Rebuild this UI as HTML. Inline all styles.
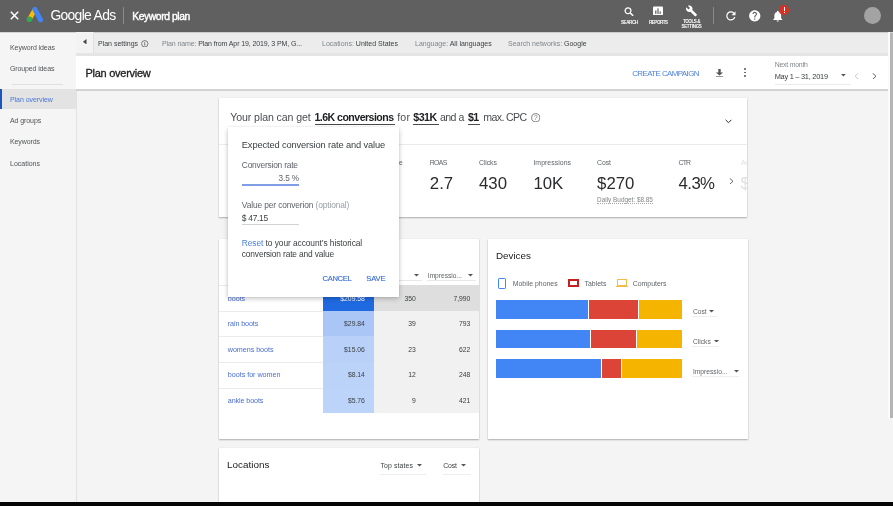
<!DOCTYPE html>
<html><head><meta charset="utf-8">
<style>
*{box-sizing:border-box;margin:0;padding:0}
html,body{width:893px;height:506px;overflow:hidden;background:#f4f4f4;}
body{filter:blur(0.5px);font-family:"Liberation Sans",sans-serif;color:#202124}
.t{position:absolute;white-space:nowrap;line-height:1}
.r{position:absolute}
.card{position:absolute;background:#fff;box-shadow:0 1px 1.5px rgba(0,0,0,.28),0 0 1px rgba(0,0,0,.12)}
</style></head>
<body>
<div class="r" style="left:0px;top:0px;width:893px;height:32px;background:#606060;"></div>
<svg class="r" style="left:9.5px;top:11px" width="9" height="9" viewBox="0 0 9 9"><path d="M0.8 0.8L8.2 8.2M8.2 0.8L0.8 8.2" stroke="#fff" stroke-width="1.5"/></svg>
<svg class="r" style="left:25px;top:6px" width="19" height="18" viewBox="0 0 19 18">
<path d="M4.5 13.2 L9.6 4.2" stroke="#fbbc04" stroke-width="4.6" stroke-linecap="round"/>
<path d="M9.9 3.4 L15.5 13.8" stroke="#4285f4" stroke-width="5" stroke-linecap="round"/>
<circle cx="4.5" cy="13.2" r="2.8" fill="#34a853"/></svg>
<div class="t" style="top:9px;font-size:13.9px;color:#fff;left:50.40px;letter-spacing:-0.674px;">Google Ads</div>
<div class="r" style="left:122.5px;top:7px;width:1px;height:16.5px;background:#8a8a8a;"></div>
<div class="t" style="top:12px;font-size:10.3px;color:#fff;left:132.30px;letter-spacing:-0.410px;-webkit-text-stroke:0.4px #fff;">Keyword plan</div>
<svg class="r" style="left:624px;top:7px" width="11" height="9" viewBox="0 0 11 9"><circle cx="4" cy="3.8" r="2.9" fill="none" stroke="#fff" stroke-width="1.3"/><path d="M6.2 6 L9.2 8.8" stroke="#fff" stroke-width="1.5"/></svg>
<div class="t" style="top:21px;font-size:4.5px;color:#fff;left:579.30px;font-weight:bold;letter-spacing:-0.381px;width:100px;text-align:center;">SEARCH</div>
<svg class="r" style="left:653px;top:5.7px" width="10" height="9.8" viewBox="0 0 10 9"><rect x="0" y="0" width="10" height="9" rx="1" fill="#fff"/><rect x="2.2" y="4" width="1.2" height="3.5" fill="#606060"/><rect x="4.4" y="2" width="1.2" height="5.5" fill="#606060"/><rect x="6.6" y="5" width="1.2" height="2.5" fill="#606060"/></svg>
<div class="t" style="top:21px;font-size:4.5px;color:#fff;left:608.30px;font-weight:bold;letter-spacing:-0.426px;width:100px;text-align:center;">REPORTS</div>
<svg class="r" style="left:684.5px;top:4.6px" width="13" height="12" viewBox="0 0 24 24"><path fill="#fff" d="M22.7 19l-9.1-9.1c.9-2.3.4-5-1.5-6.9-2-2-5-2.4-7.4-1.3L9 6 6 9 1.6 4.7C.4 7.1.9 10.1 2.9 12.1c1.9 1.9 4.6 2.4 6.9 1.5l9.1 9.1c.4.4 1 .4 1.4 0l2.3-2.3c.5-.4.5-1.1.1-1.4z"/></svg>
<div class="t" style="top:20px;font-size:4.5px;color:#fff;left:641.50px;font-weight:bold;letter-spacing:-0.403px;width:100px;text-align:center;">TOOLS &amp;</div>
<div class="t" style="top:25px;font-size:4.5px;color:#fff;left:641.50px;font-weight:bold;letter-spacing:-0.301px;width:100px;text-align:center;">SETTINGS</div>
<div class="r" style="left:713px;top:7px;width:1px;height:16.5px;background:#8a8a8a;"></div>
<svg class="r" style="left:724.1px;top:9px" width="13.8" height="13.8" viewBox="0 0 24 24"><path fill="#fff" d="M17.65 6.35A7.958 7.958 0 0 0 12 4c-4.42 0-7.99 3.58-7.99 8s3.57 8 7.99 8c3.73 0 6.84-2.55 7.73-6h-2.08A5.99 5.99 0 0 1 12 18c-3.31 0-6-2.69-6-6s2.69-6 6-6c1.66 0 3.14.69 4.22 1.78L13 11h7V4l-2.35 2.35z"/></svg>
<svg class="r" style="left:747.5px;top:8.7px" width="13.5" height="13.5" viewBox="0 0 24 24"><path fill="#fff" d="M12 2C6.48 2 2 6.48 2 12s4.48 10 10 10 10-4.48 10-10S17.52 2 12 2zm1 17h-2v-2h2v2zm2.07-7.75l-.9.92C13.45 12.9 13 13.5 13 15h-2v-.5c0-1.1.45-2.1 1.17-2.83l1.24-1.26c.37-.36.59-.86.59-1.41 0-1.1-.9-2-2-2s-2 .9-2 2H8c0-2.21 1.79-4 4-4s4 1.79 4 4c0 .88-.36 1.68-.93 2.25z"/></svg>
<svg class="r" style="left:770.5px;top:8.5px" width="13.5" height="14" viewBox="0 0 24 24"><path fill="#fff" d="M12 22c1.1 0 2-.9 2-2h-4c0 1.1.89 2 2 2zm6-6v-5c0-3.07-1.64-5.64-4.5-6.32V4c0-.83-.67-1.5-1.5-1.5s-1.5.67-1.5 1.5v.68C7.63 5.36 6 7.92 6 11v5l-2 2v1h16v-1l-2-2z"/></svg>
<div class="r" style="left:779px;top:5px;width:10.4px;height:10.4px;border-radius:50%;background:#d93025"></div>
<div class="r" style="left:783.6px;top:6.8px;width:1.2px;height:4.2px;background:#fff;"></div>
<div class="r" style="left:783.6px;top:12px;width:1.2px;height:1.2px;background:#fff;"></div>
<div class="r" style="left:864px;top:6.9px;width:17px;height:17px;border-radius:50%;background:#a3a3a3"></div>
<div class="r" style="left:0px;top:32px;width:76px;height:474px;background:#f5f5f5;"></div>
<div class="r" style="left:75.5px;top:32px;width:0.8px;height:474px;background:#e2e2e2;"></div>
<div class="t" style="top:44px;font-size:7px;color:#505357;left:10.00px;letter-spacing:-0.076px;">Keyword ideas</div>
<div class="t" style="top:65px;font-size:7px;color:#505357;left:10.00px;letter-spacing:-0.127px;">Grouped ideas</div>
<div class="r" style="left:12px;top:83.5px;width:51px;height:0.8px;background:#e0e0e0;"></div>
<div class="r" style="left:0px;top:88.8px;width:75.5px;height:20.5px;background:#e3e3e3;"></div>
<div class="r" style="left:0px;top:88.8px;width:1.5px;height:20.5px;background:#1a55c0;"></div>
<div class="t" style="top:96px;font-size:7px;color:#4a76d8;left:10.00px;letter-spacing:-0.058px;">Plan overview</div>
<div class="t" style="top:117px;font-size:7px;color:#505357;left:10.00px;letter-spacing:-0.089px;">Ad groups</div>
<div class="t" style="top:138px;font-size:7px;color:#505357;left:10.00px;letter-spacing:-0.105px;">Keywords</div>
<div class="t" style="top:160px;font-size:7px;color:#505357;left:10.00px;letter-spacing:0.004px;">Locations</div>
<div class="r" style="left:76px;top:32px;width:813px;height:21px;background:#ececec;"></div>
<div class="r" style="left:0px;top:32px;width:893px;height:1.2px;background:rgba(0,0,0,0.13);"></div>
<div class="r" style="left:76px;top:52.7px;width:813px;height:3px;background:#e5e5e5;"></div>
<div class="r" style="left:76px;top:32px;width:17px;height:20.7px;background:#f3f3f3;"></div>
<div class="r" style="left:93px;top:32px;width:0.8px;height:20.7px;background:#e2e2e2;"></div>
<svg class="r" style="left:83px;top:38.8px" width="4" height="5.5" viewBox="0 0 4 5.5"><path d="M3.5 0 L0 2.75 L3.5 5.5z" fill="#444"/></svg>
<div class="t" style="top:40px;font-size:7px;color:#3c4043;left:98.00px;">Plan settings</div>
<svg class="r" style="left:141px;top:39.8px" width="7.5" height="7.5" viewBox="0 0 8 8"><circle cx="4" cy="4" r="3.4" fill="none" stroke="#555" stroke-width="0.8"/><rect x="3.55" y="3.4" width="0.9" height="2.5" fill="#555"/><rect x="3.55" y="2" width="0.9" height="0.9" fill="#555"/></svg>
<div class="t" style="top:40px;font-size:7px;color:#80868b;left:162.00px;letter-spacing:-0.1px;">Plan name: <span style="color:#3c4043">Plan from Apr 19, 2019, 3 PM, G...</span></div>
<div class="t" style="top:40px;font-size:7px;color:#80868b;left:322.00px;">Locations: <span style="color:#3c4043">United States</span></div>
<div class="t" style="top:40px;font-size:7px;color:#80868b;left:415.00px;">Language: <span style="color:#3c4043">All languages</span></div>
<div class="t" style="top:40px;font-size:7px;color:#80868b;left:508.00px;">Search networks: <span style="color:#3c4043">Google</span></div>
<div class="r" style="left:76px;top:55.5px;width:813px;height:34px;background:#ffffff;"></div>
<div class="r" style="left:76px;top:89px;width:813px;height:2px;background:#d2d2d2;"></div>
<div class="t" style="top:68px;font-size:11px;color:#202124;left:85.50px;letter-spacing:-0.267px;-webkit-text-stroke:0.3px #202124;">Plan overview</div>
<div class="t" style="top:70px;font-size:7.9px;color:#4a7fdc;left:632.20px;letter-spacing:-0.558px;">CREATE CAMPAIGN</div>
<svg class="r" style="left:714.5px;top:68.5px" width="9" height="8.5" viewBox="0 0 9 8.5"><path d="M3.3 0h2.4v3.4h2.4L4.5 6.6 0.9 3.4h2.4z" fill="#555"/><rect x="0.8" y="7.4" width="7.4" height="1.1" fill="#555"/></svg>
<div class="r" style="left:743.9px;top:68.3px;width:1.8px;height:1.8px;background:#555;border-radius:50%"></div>
<div class="r" style="left:743.9px;top:71.7px;width:1.8px;height:1.8px;background:#555;border-radius:50%"></div>
<div class="r" style="left:743.9px;top:75.1px;width:1.8px;height:1.8px;background:#555;border-radius:50%"></div>
<div class="t" style="top:62px;font-size:6.9px;color:#80868b;left:774.70px;letter-spacing:-0.220px;">Next month</div>
<div class="t" style="top:73px;font-size:7.4px;color:#3c4043;left:774.70px;letter-spacing:-0.252px;">May 1 – 31, 2019</div>
<svg class="r" style="left:841px;top:74.3px" width="4.8" height="2.6" viewBox="0 0 4.8 2.6"><path d="M0 0h4.8L2.4 2.6z" fill="#555"/></svg>
<div class="r" style="left:774.5px;top:84px;width:76px;height:0.8px;background:#ececec;"></div>
<svg class="r" style="left:853.5px;top:72.5px" width="5" height="6.5" viewBox="0 0 5 6.5"><path d="M4.3 0.3L1 3.25L4.3 6.2" fill="none" stroke="#c4c4c4" stroke-width="0.9"/></svg>
<svg class="r" style="left:872.3px;top:72.5px" width="5" height="6.5" viewBox="0 0 5 6.5"><path d="M0.7 0.3L4 3.25L0.7 6.2" fill="none" stroke="#555" stroke-width="0.9"/></svg>
<div class="r" style="left:888px;top:32px;width:2px;height:387px;background:#fbfbfb;"></div>
<div class="r" style="left:890px;top:33px;width:3px;height:385px;background:#b5b5b5;"></div>
<div class="card" style="left:219px;top:98px;width:528px;height:118.5px"></div>
<div class="t" style="top:112px;font-size:10.6px;color:#4a4d52;left:230.30px;letter-spacing:-0.107px;">Your plan can get</div>
<div class="t" style="top:112px;font-size:10.6px;color:#202124;left:314.50px;font-weight:bold;letter-spacing:-0.545px;">1.6K conversions</div>
<div class="r" style="left:314.8px;top:123.5px;width:80px;height:1.6px;background:#4a4a4a;"></div>
<div class="t" style="top:112px;font-size:10.6px;color:#4a4d52;left:397.20px;letter-spacing:0.215px;">for</div>
<div class="t" style="top:112px;font-size:10.6px;color:#202124;left:413.20px;font-weight:bold;letter-spacing:-0.448px;">$31K</div>
<div class="r" style="left:413.2px;top:123.5px;width:25.8px;height:1.6px;background:#4a4a4a;"></div>
<div class="t" style="top:112px;font-size:10.6px;color:#4a4d52;left:439.90px;letter-spacing:-0.533px;">and a</div>
<div class="t" style="top:112px;font-size:10.6px;color:#202124;left:468.10px;font-weight:bold;letter-spacing:-0.787px;">$1</div>
<div class="r" style="left:468.1px;top:123.5px;width:12.4px;height:1.6px;background:#4a4a4a;"></div>
<div class="t" style="top:112px;font-size:10.6px;color:#4a4d52;left:483.30px;letter-spacing:-0.642px;">max. CPC</div>
<svg class="r" style="left:530.8px;top:112.8px" width="9.5" height="9.5" viewBox="0 0 10 10"><circle cx="5" cy="5" r="4.3" fill="none" stroke="#6b6f74" stroke-width="0.95"/><text x="5" y="7.6" font-size="6.8" text-anchor="middle" fill="#6b6f74" font-family="Liberation Sans">?</text></svg>
<svg class="r" style="left:724.5px;top:118.6px" width="7" height="5" viewBox="0 0 7 5"><path d="M0.6 0.8L3.5 3.7L6.4 0.8" fill="none" stroke="#333" stroke-width="1"/></svg>
<div class="r" style="left:219px;top:144px;width:528px;height:0.8px;background:#ebebeb;"></div>
<div class="t" style="top:160px;font-size:6.6px;color:#5f6368;left:399.00px;">e</div>
<div class="t" style="top:160px;font-size:6.9px;color:#5f6368;left:429.80px;letter-spacing:-0.685px;">ROAS</div>
<div class="t" style="top:176px;font-size:16.8px;color:#2a2b2e;left:429.80px;">2.7</div>
<div class="t" style="top:160px;font-size:6.9px;color:#5f6368;left:479.00px;letter-spacing:-0.100px;">Clicks</div>
<div class="t" style="top:176px;font-size:16.8px;color:#2a2b2e;left:479.00px;">430</div>
<div class="t" style="top:160px;font-size:6.9px;color:#5f6368;left:533.40px;letter-spacing:0.050px;">Impressions</div>
<div class="t" style="top:176px;font-size:16.8px;color:#2a2b2e;left:533.40px;">10K</div>
<div class="t" style="top:160px;font-size:6.9px;color:#5f6368;left:597.10px;letter-spacing:-0.095px;">Cost</div>
<div class="t" style="top:176px;font-size:16.8px;color:#2a2b2e;left:597.10px;">$270</div>
<div class="t" style="top:160px;font-size:6.9px;color:#5f6368;left:678.60px;letter-spacing:-0.840px;">CTR</div>
<div class="t" style="top:176px;font-size:16.8px;color:#2a2b2e;left:678.60px;letter-spacing:-0.6px;">4.3%</div>
<div class="t" style="top:197px;font-size:6.4px;color:#80868b;left:597.10px;">Daily Budget: $8.85</div>
<div class="r" style="left:597.1px;top:203.2px;width:56px;height:0;border-top:1px dotted #a8a8a8"></div>
<svg class="r" style="left:729.3px;top:177.6px" width="5" height="6.5" viewBox="0 0 5 6.5"><path d="M0.7 0.3L4 3.25L0.7 6.2" fill="none" stroke="#555" stroke-width="0.9"/></svg>
<div class="r" style="left:736px;top:150px;width:11px;height:50px;overflow:hidden">
<div class="t" style="top:10px;font-size:6.9px;color:#e0e0e0;left:5.00px;">Av</div>
<div class="t" style="top:26px;font-size:16.8px;color:#e0e0e0;left:4.50px;">$</div>
</div>
<div class="card" style="left:219px;top:239px;width:260px;height:200.3px"></div>
<div class="r" style="left:322.6px;top:285px;width:156.4px;height:127.6px;background:#f1f1f1;"></div>
<div class="r" style="left:373.6px;top:285px;width:105.4px;height:26px;background:#dedede;"></div>
<div class="r" style="left:322.6px;top:285px;width:51px;height:26px;background:#1f6ae0;"></div>
<div class="r" style="left:322.6px;top:311px;width:51px;height:25px;background:#aac6f6;"></div>
<div class="r" style="left:322.6px;top:336px;width:51px;height:26px;background:#b9d1f9;"></div>
<div class="r" style="left:322.6px;top:362px;width:51px;height:26px;background:#bcd3f9;"></div>
<div class="r" style="left:322.6px;top:388px;width:51px;height:25px;background:#bdd4fa;"></div>
<div class="r" style="left:219px;top:285px;width:103.6px;height:1px;background:#ebebeb;"></div>
<div class="r" style="left:219px;top:311px;width:103.6px;height:1px;background:#ebebeb;"></div>
<div class="r" style="left:219px;top:336px;width:103.6px;height:1px;background:#ebebeb;"></div>
<div class="r" style="left:219px;top:362px;width:103.6px;height:1px;background:#ebebeb;"></div>
<div class="r" style="left:219px;top:388px;width:103.6px;height:1px;background:#ebebeb;"></div>
<svg class="r" style="left:414.2px;top:274.1px" width="5" height="2.6" viewBox="0 0 5 2.6"><path d="M0 0h5L2.5 2.6z" fill="#555"/></svg>
<div class="r" style="left:399px;top:280.2px;width:22.7px;height:0.8px;background:#e8e8e8;"></div>
<div class="t" style="top:273px;font-size:6.6px;color:#5f6368;left:427.80px;">Impressio...</div>
<svg class="r" style="left:468.4px;top:274.1px" width="5" height="2.6" viewBox="0 0 5 2.6"><path d="M0 0h5L2.5 2.6z" fill="#555"/></svg>
<div class="r" style="left:426.8px;top:280.2px;width:48.8px;height:0.8px;background:#e8e8e8;"></div>
<div class="t" style="top:295px;font-size:7.2px;color:#4a6fd0;left:227.80px;letter-spacing:-0.053px;">boots</div>
<div class="t" style="top:296px;font-size:6.8px;color:#fff;left:164.90px;width:200px;text-align:right;">$209.58</div>
<div class="t" style="top:296px;font-size:6.8px;color:#3c4043;left:215.90px;width:200px;text-align:right;">350</div>
<div class="t" style="top:296px;font-size:6.8px;color:#3c4043;left:270.40px;width:200px;text-align:right;">7,990</div>
<div class="t" style="top:320px;font-size:7.2px;color:#4a6fd0;left:227.80px;letter-spacing:-0.125px;">rain boots</div>
<div class="t" style="top:321px;font-size:6.8px;color:#3c4043;left:164.90px;width:200px;text-align:right;">$29.84</div>
<div class="t" style="top:321px;font-size:6.8px;color:#3c4043;left:215.90px;width:200px;text-align:right;">39</div>
<div class="t" style="top:321px;font-size:6.8px;color:#3c4043;left:270.40px;width:200px;text-align:right;">793</div>
<div class="t" style="top:346px;font-size:7.2px;color:#4a6fd0;left:227.80px;letter-spacing:-0.058px;">womens boots</div>
<div class="t" style="top:347px;font-size:6.8px;color:#3c4043;left:164.90px;width:200px;text-align:right;">$15.06</div>
<div class="t" style="top:347px;font-size:6.8px;color:#3c4043;left:215.90px;width:200px;text-align:right;">23</div>
<div class="t" style="top:347px;font-size:6.8px;color:#3c4043;left:270.40px;width:200px;text-align:right;">622</div>
<div class="t" style="top:371px;font-size:7.2px;color:#4a6fd0;left:227.80px;letter-spacing:-0.031px;">boots for women</div>
<div class="t" style="top:372px;font-size:6.8px;color:#3c4043;left:164.90px;width:200px;text-align:right;">$8.14</div>
<div class="t" style="top:372px;font-size:6.8px;color:#3c4043;left:215.90px;width:200px;text-align:right;">12</div>
<div class="t" style="top:372px;font-size:6.8px;color:#3c4043;left:270.40px;width:200px;text-align:right;">248</div>
<div class="t" style="top:397px;font-size:7.2px;color:#4a6fd0;left:227.80px;letter-spacing:-0.113px;">ankle boots</div>
<div class="t" style="top:398px;font-size:6.8px;color:#3c4043;left:164.90px;width:200px;text-align:right;">$5.76</div>
<div class="t" style="top:398px;font-size:6.8px;color:#3c4043;left:215.90px;width:200px;text-align:right;">9</div>
<div class="t" style="top:398px;font-size:6.8px;color:#3c4043;left:270.40px;width:200px;text-align:right;">421</div>
<div class="card" style="left:487.6px;top:239px;width:260px;height:200.2px"></div>
<div class="t" style="top:251px;font-size:9.8px;color:#202124;left:496.00px;">Devices</div>
<div class="r" style="left:497.9px;top:277.5px;width:8.2px;height:11.1px;border:1.4px solid #4285f4;border-radius:1.2px"></div>
<div class="t" style="top:281px;font-size:6.9px;color:#5f6368;left:512.80px;">Mobile phones</div>
<div class="r" style="left:567.6px;top:279px;width:11.8px;height:8.2px;border:2px solid #c5221f"></div>
<div class="t" style="top:281px;font-size:6.9px;color:#5f6368;left:584.60px;">Tablets</div>
<div class="r" style="left:617.2px;top:279px;width:9.6px;height:7.2px;border:1.2px solid #f2bb4a"></div>
<div class="r" style="left:616px;top:286.2px;width:12px;height:1.1px;background:#f2bb4a;"></div>
<div class="t" style="top:281px;font-size:6.9px;color:#5f6368;left:632.80px;">Computers</div>
<div class="r" style="left:495.8px;top:300.2px;width:92.30000000000001px;height:18.6px;background:#4285f4;"></div>
<div class="r" style="left:589.0px;top:300.2px;width:48.6px;height:18.6px;background:#db4437;"></div>
<div class="r" style="left:638.5px;top:300.2px;width:43.6px;height:18.6px;background:#f4b400;"></div>
<div class="r" style="left:495.8px;top:329.9px;width:94.09999999999997px;height:18.6px;background:#4285f4;"></div>
<div class="r" style="left:590.8px;top:329.9px;width:45.30000000000005px;height:18.6px;background:#db4437;"></div>
<div class="r" style="left:637.0px;top:329.9px;width:45.1px;height:18.6px;background:#f4b400;"></div>
<div class="r" style="left:495.8px;top:359.0px;width:105.40000000000003px;height:18.6px;background:#4285f4;"></div>
<div class="r" style="left:602.1px;top:359.0px;width:18.899999999999956px;height:18.6px;background:#db4437;"></div>
<div class="r" style="left:621.9px;top:359.0px;width:60.200000000000024px;height:18.6px;background:#f4b400;"></div>
<div class="t" style="top:309px;font-size:6.7px;color:#5f6368;left:692.90px;">Cost</div>
<svg class="r" style="left:709.2px;top:310.3px" width="5" height="2.6" viewBox="0 0 5 2.6"><path d="M0 0h5L2.5 2.6z" fill="#555"/></svg>
<div class="r" style="left:692px;top:316.20000000000005px;width:24.5px;height:0.8px;background:#eeeeee;"></div>
<div class="t" style="top:339px;font-size:6.7px;color:#5f6368;left:692.90px;">Clicks</div>
<svg class="r" style="left:713.5px;top:339.7px" width="5" height="2.6" viewBox="0 0 5 2.6"><path d="M0 0h5L2.5 2.6z" fill="#555"/></svg>
<div class="r" style="left:692px;top:345.6px;width:26.5px;height:0.8px;background:#eeeeee;"></div>
<div class="t" style="top:369px;font-size:6.7px;color:#5f6368;left:692.90px;">Impressio...</div>
<svg class="r" style="left:733.9px;top:370.3px" width="5" height="2.6" viewBox="0 0 5 2.6"><path d="M0 0h5L2.5 2.6z" fill="#555"/></svg>
<div class="r" style="left:692px;top:376.20000000000005px;width:47px;height:0.8px;background:#eeeeee;"></div>
<div class="card" style="left:218.8px;top:447.5px;width:260.6px;height:70px"></div>
<div class="t" style="top:460px;font-size:9.9px;color:#202124;left:227.10px;">Locations</div>
<div class="t" style="top:463px;font-size:6.9px;color:#3c4043;left:380.40px;letter-spacing:0.128px;">Top states</div>
<svg class="r" style="left:417px;top:464px" width="5" height="2.6" viewBox="0 0 5 2.6"><path d="M0 0h5L2.5 2.6z" fill="#555"/></svg>
<div class="r" style="left:380px;top:473.6px;width:46px;height:0.8px;background:#eeeeee;"></div>
<div class="t" style="top:463px;font-size:6.9px;color:#3c4043;left:443.30px;letter-spacing:-0.195px;">Cost</div>
<svg class="r" style="left:461.2px;top:464px" width="5" height="2.6" viewBox="0 0 5 2.6"><path d="M0 0h5L2.5 2.6z" fill="#555"/></svg>
<div class="r" style="left:443px;top:473.6px;width:27.5px;height:0.8px;background:#eeeeee;"></div>
<div class="r" style="left:0px;top:501.8px;width:893px;height:5px;background:#050505;"></div>
<div class="r" style="left:227.7px;top:127px;width:171.4px;height:169.8px;background:#fff;box-shadow:0 1.5px 5px rgba(0,0,0,.24),0 0 2px rgba(0,0,0,.08)"></div>
<div class="t" style="top:141px;font-size:9.3px;color:#3c4043;left:241.80px;letter-spacing:-0.135px;">Expected conversion rate and value</div>
<div class="t" style="top:161px;font-size:8.4px;color:#5f6368;left:241.80px;letter-spacing:-0.214px;">Conversion rate</div>
<div class="t" style="top:175px;font-size:8.2px;color:#5f6368;left:99.00px;width:200px;text-align:right;letter-spacing:-0.1px;">3.5 %</div>
<div class="r" style="left:241.8px;top:184px;width:57.2px;height:2px;background:#7f9ee6;"></div>
<div class="t" style="top:201px;font-size:8.4px;color:#5f6368;left:241.80px;letter-spacing:-0.122px;">Value per converion <span style="color:#9aa0a6">(optional)</span></div>
<div class="t" style="top:214px;font-size:8.4px;color:#3c4043;left:241.80px;letter-spacing:-0.270px;">$ 47.15</div>
<div class="r" style="left:241.8px;top:223.8px;width:57.2px;height:0.9px;background:#d2d2d2;"></div>
<div class="t" style="top:239px;font-size:8.4px;color:#3c4043;left:241.80px;letter-spacing:-0.070px;"><span style="color:#4a7fdc">Reset</span> to your account’s historical</div>
<div class="t" style="top:250px;font-size:8.4px;color:#3c4043;left:241.80px;letter-spacing:-0.146px;">conversion rate and value</div>
<div class="t" style="top:275px;font-size:7.6px;color:#3b6fd4;left:322.50px;letter-spacing:-0.327px;-webkit-text-stroke:0.15px #3b6fd4;">CANCEL</div>
<div class="t" style="top:275px;font-size:7.6px;color:#3b6fd4;left:366.20px;letter-spacing:-0.105px;-webkit-text-stroke:0.15px #3b6fd4;">SAVE</div>
</body></html>
